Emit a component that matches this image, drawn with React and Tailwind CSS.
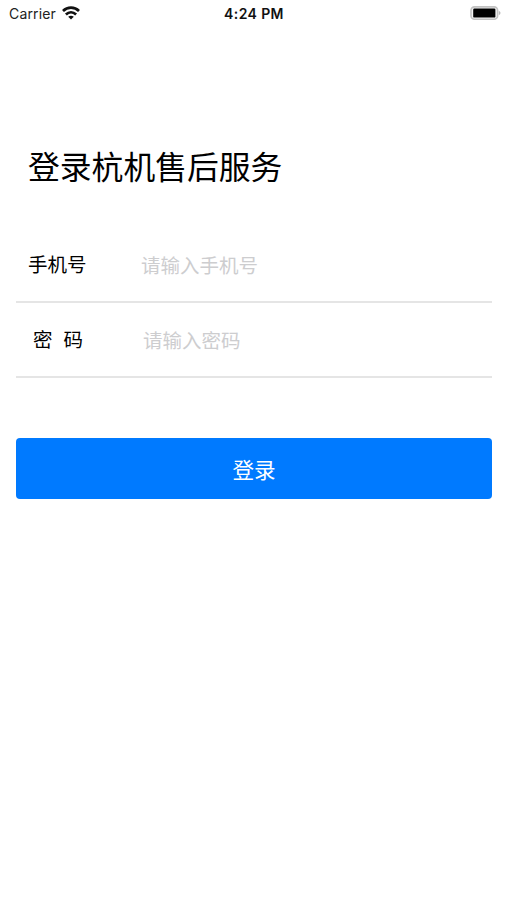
function WifiIcon() {
  return (
    <svg className="ml-[6px] h-[14px] w-[18px]" viewBox="0 0 18 14" fill="none" stroke="#111" strokeWidth="2.7">
      <path d="M1 5C5.5 0.6 12.5 0.6 17 5" />
      <path d="M3.9 8.4C7 5.5 11 5.5 14.1 8.4" />
      <path d="M6.2 10.8C8 9.3 10 9.3 11.8 10.8L9 13.6Z" fill="#111" stroke="none" />
    </svg>
  );
}

function BatteryIcon() {
  return (
    <svg className="h-[14px] w-[31px]" viewBox="0 0 31 14">
      <rect x="1" y="0.9" width="26.6" height="12.3" rx="3.5" fill="#f4f4f4" stroke="#c2c2c2" strokeWidth="1.6" />
      <rect x="3.2" y="2.6" width="22.2" height="9" rx="1.2" fill="#000" />
      <path d="M28.8 5v4c2.2-.6 2.2-3.4 0-4Z" fill="#b9b9b9" />
    </svg>
  );
}

function StatusBar() {
  return (
    <header className="grid h-[26px] grid-cols-[1fr_auto_1fr] items-center pr-[6px] pl-[9px] font-['Inter','Liberation_Sans',sans-serif] text-[14px] text-[#111]">
      <div className="flex h-full items-center">
        <span className="text-[14px] tracking-[0.15px] text-[#222]">Carrier</span>
        <WifiIcon />
      </div>
      <span className="mr-[2px] text-[14px] font-semibold tracking-[0.4px]">4:24 PM</span>
      <div className="flex justify-end">
        <BatteryIcon />
      </div>
    </header>
  );
}

function Field({ label, placeholder, type, labelClass, inputClass }) {
  return (
    <label className="flex h-[75px] items-center border-b-2 border-[#e5e5e5] pb-[2px]">
      <span className={`flex w-[125px] shrink-0 text-[19.5px] text-black ${labelClass}`}>{label}</span>
      <input
        type={type}
        placeholder={placeholder}
        className={`min-w-0 flex-1 pt-[2px] text-[19.5px] outline-none placeholder:text-[#cdcdcf] ${inputClass}`}
      />
    </label>
  );
}

export default function App() {
  return (
    <div className="min-h-[900px] bg-white font-['Noto_Sans_CJK_SC',sans-serif]">
      <StatusBar />
      <main className="pt-[115px] pr-[15px] pl-[16px]">
        <h1 className="pl-[12px] text-[31.8px] leading-[48px] text-black">登录杭机售后服务</h1>
        <form className="pt-[39px]">
          <Field label="手机号" placeholder="请输入手机号" type="text" labelClass="pl-[12px]" inputClass="" />
          <Field
            label={
              <>
                <span>密</span>
                <span>码</span>
              </>
            }
            placeholder="请输入密码"
            type="password"
            labelClass="gap-[11px] pl-[17px]"
            inputClass="pl-[2px]"
          />
          <button
            type="button"
            className="mt-[60px] h-[61px] w-full rounded-[4px] bg-[#007aff] pt-[1px] text-[21.6px] text-white"
          >
            登录
          </button>
        </form>
      </main>
    </div>
  );
}
